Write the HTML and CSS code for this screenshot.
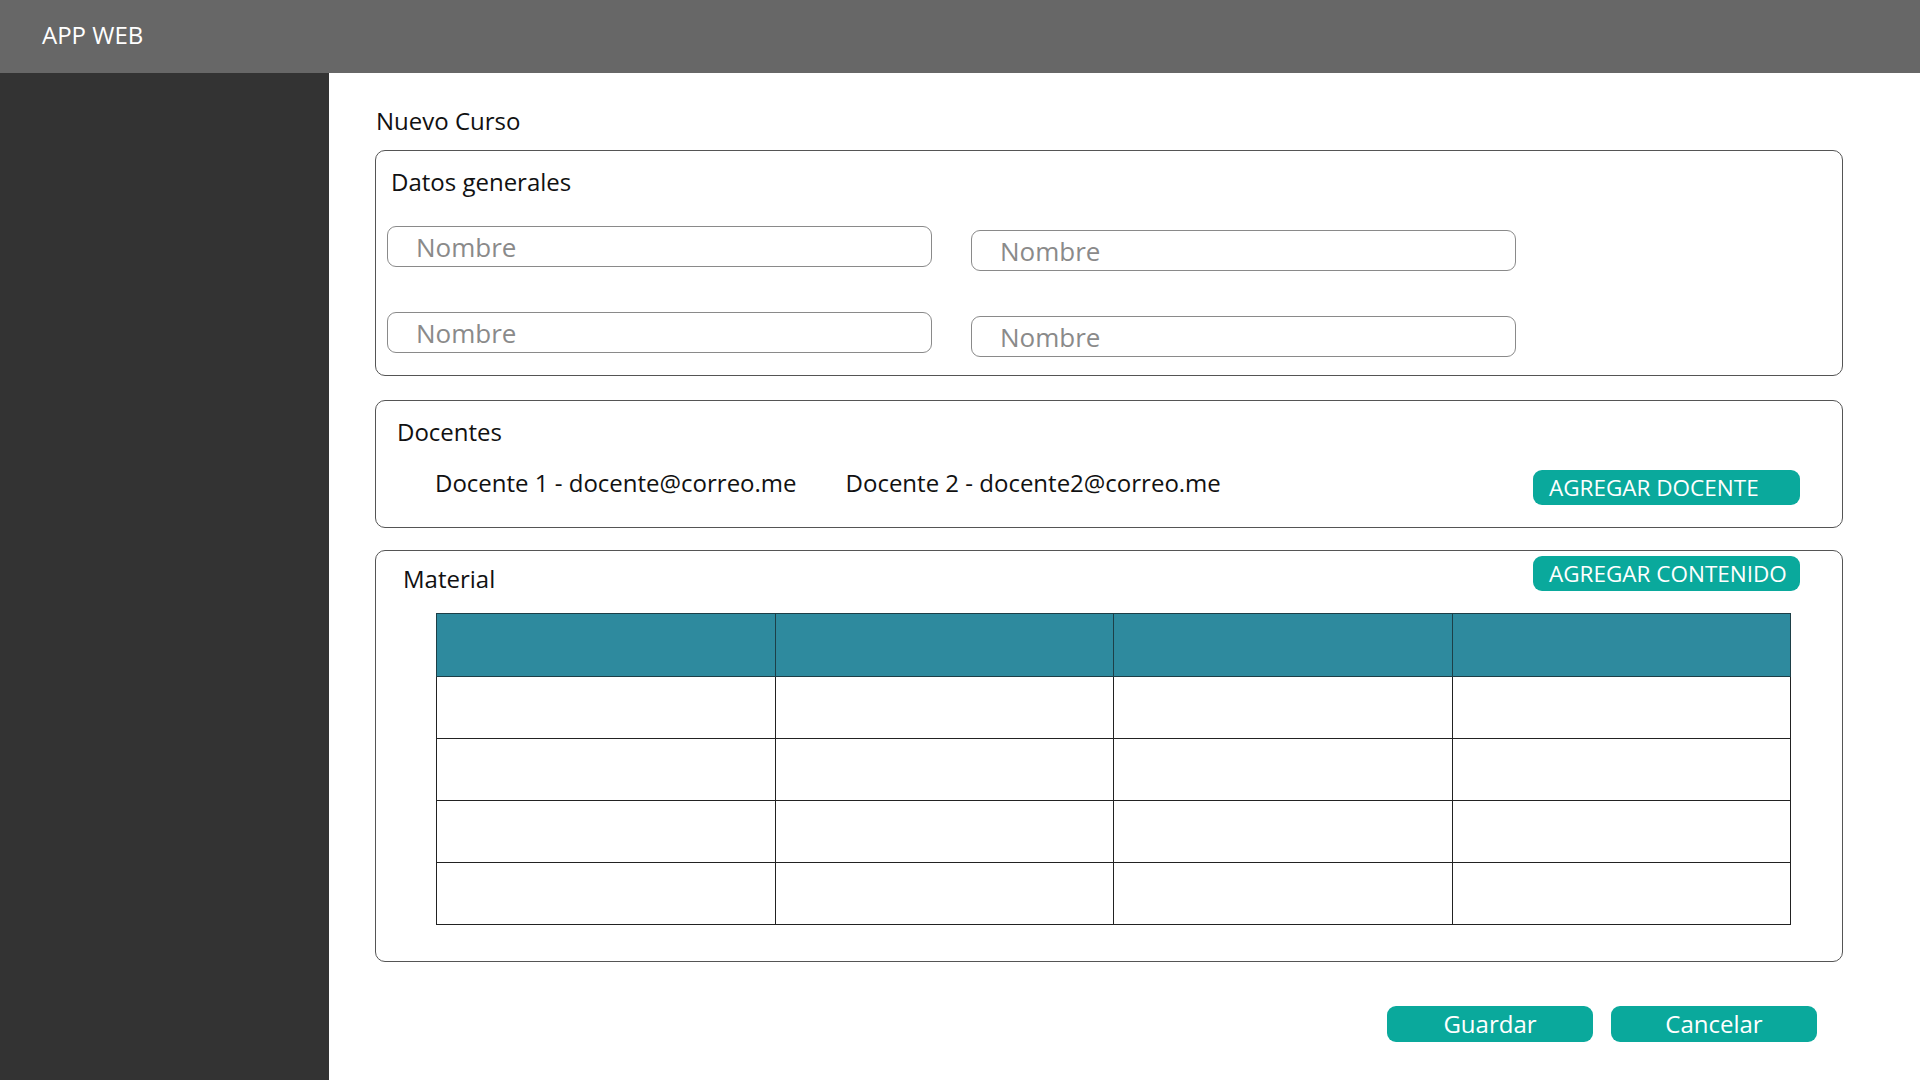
FILE: index.html
```html
<!DOCTYPE html>
<html lang="es">
<head>
<meta charset="utf-8">
<title>APP WEB - Nuevo Curso</title>
<link rel="stylesheet" href="styles.css">
</head>
<body>
<header class="topbar">
  <span class="brand">APP WEB</span>
</header>
<div class="layout">
  <aside class="sidebar"></aside>
  <main class="main">
    <h1 class="page-title">Nuevo Curso</h1>

    <section class="card card-general">
      <h2 class="card-title">Datos generales</h2>
      <div class="fields">
        <div class="field-col">
          <input class="field" type="text" placeholder="Nombre">
          <input class="field" type="text" placeholder="Nombre">
        </div>
        <div class="field-col field-col-offset">
          <input class="field" type="text" placeholder="Nombre">
          <input class="field" type="text" placeholder="Nombre">
        </div>
      </div>
    </section>

    <section class="card card-docentes">
      <h2 class="card-title">Docentes</h2>
      <div class="docentes-row">
        <span class="docente">Docente 1 - docente@correo.me</span>
        <span class="docente">Docente 2 - docente2@correo.me</span>
        <button class="btn btn-add" type="button">AGREGAR DOCENTE</button>
      </div>
    </section>

    <section class="card card-material">
      <div class="material-head">
        <h2 class="card-title material-title">Material</h2>
        <button class="btn btn-add" type="button">AGREGAR CONTENIDO</button>
      </div>
      <table class="material-table">
        <thead>
          <tr><th></th><th></th><th></th><th></th></tr>
        </thead>
        <tbody>
          <tr><td></td><td></td><td></td><td></td></tr>
          <tr><td></td><td></td><td></td><td></td></tr>
          <tr><td></td><td></td><td></td><td></td></tr>
          <tr><td></td><td></td><td></td><td></td></tr>
        </tbody>
      </table>
    </section>

    <div class="actions">
      <button class="btn btn-action" type="button">Guardar</button>
      <button class="btn btn-action" type="button">Cancelar</button>
    </div>
  </main>
</div>
</body>
</html>
```

FILE: styles.css
```css
* {
  box-sizing: border-box;
}

html, body {
  margin: 0;
  padding: 0;
  height: 100%;
}

body {
  font-family: "Open Sans", "Liberation Sans", sans-serif;
  color: #111;
  background: #ffffff;
  overflow: hidden;
}

.topbar {
  height: 73px;
  background: #676767;
  display: flex;
  align-items: center;
  padding-left: 42px;
}

.brand {
  color: #ffffff;
  font-size: 24px;
  line-height: 32px;
  margin-top: -4px;
}

.layout {
  display: flex;
  height: 1007px;
}

.sidebar {
  width: 329px;
  flex: 0 0 329px;
  background: #333333;
}

.main {
  flex: 1;
  padding: 32px 77px 0 46px;
  display: flex;
  flex-direction: column;
}

.page-title {
  margin: 0 0 13px 1px;
  font-size: 24px;
  font-weight: 400;
  line-height: 32px;
}

.card {
  border: 1px solid #555;
  border-radius: 10px;
}

.card-title {
  margin: 0;
  font-size: 24px;
  font-weight: 400;
  line-height: 32px;
}

/* Datos generales */
.card-general {
  height: 226px;
  padding: 15px 11px 0 11px;
}

.card-general .card-title {
  margin-left: 4px;
}

.fields {
  display: flex;
  gap: 39px;
  margin-top: 28px;
}

.field-col {
  display: flex;
  flex-direction: column;
  gap: 45px;
}

.field-col-offset {
  padding-top: 4px;
}

.field {
  width: 545px;
  height: 41px;
  border: 1px solid #8a8a8a;
  border-radius: 9px;
  padding: 0 0 0 28px;
  font-family: "Open Sans", "Liberation Sans", sans-serif;
  font-size: 26px;
  color: #333;
  background: #fff;
  outline: none;
}

.field::placeholder {
  color: #8a8a8a;
}

/* Docentes */
.card-docentes {
  margin-top: 24px;
  height: 128px;
  padding: 15px 42px 0 21px;
}

.docentes-row {
  display: flex;
  align-items: flex-start;
  margin-top: 22px;
  padding-left: 38px;
}

.docente {
  font-size: 24px;
  line-height: 26px;
  margin-right: 49px;
  white-space: nowrap;
}

.btn {
  border: none;
  color: #ffffff;
  background: #0aa99c;
  font-family: "Open Sans", "Liberation Sans", sans-serif;
  cursor: pointer;
}

.btn-add {
  margin-left: auto;
  width: 267px;
  height: 35px;
  border-radius: 9px;
  font-size: 22.5px;
  line-height: 35px;
  text-align: left;
  padding: 0 0 0 16px;
  white-space: nowrap;
}

/* Material */
.card-material {
  margin-top: 22px;
  height: 412px;
  padding: 5px 42px 0 27px;
}

.material-head {
  display: flex;
  align-items: flex-start;
}

.material-title {
  margin-top: 7px;
}

.material-table {
  margin: 18px 9px 0 33px;
  width: 1355px;
  border-collapse: collapse;
  table-layout: fixed;
}

.material-table th,
.material-table td {
  border: 1.5px solid #222;
  padding: 0;
}

.material-table th {
  height: 63px;
  background: #2e8a9e;
  border-color: #1d3f47;
}

.material-table td {
  height: 62px;
  background: #ffffff;
}

/* Acciones */
.actions {
  display: flex;
  justify-content: flex-end;
  gap: 18px;
  margin-top: 44px;
  margin-right: 26px;
}

.btn-action {
  width: 206px;
  height: 36px;
  border-radius: 9px;
  font-size: 24px;
  line-height: 36px;
  padding: 0;
  text-align: center;
}
```
